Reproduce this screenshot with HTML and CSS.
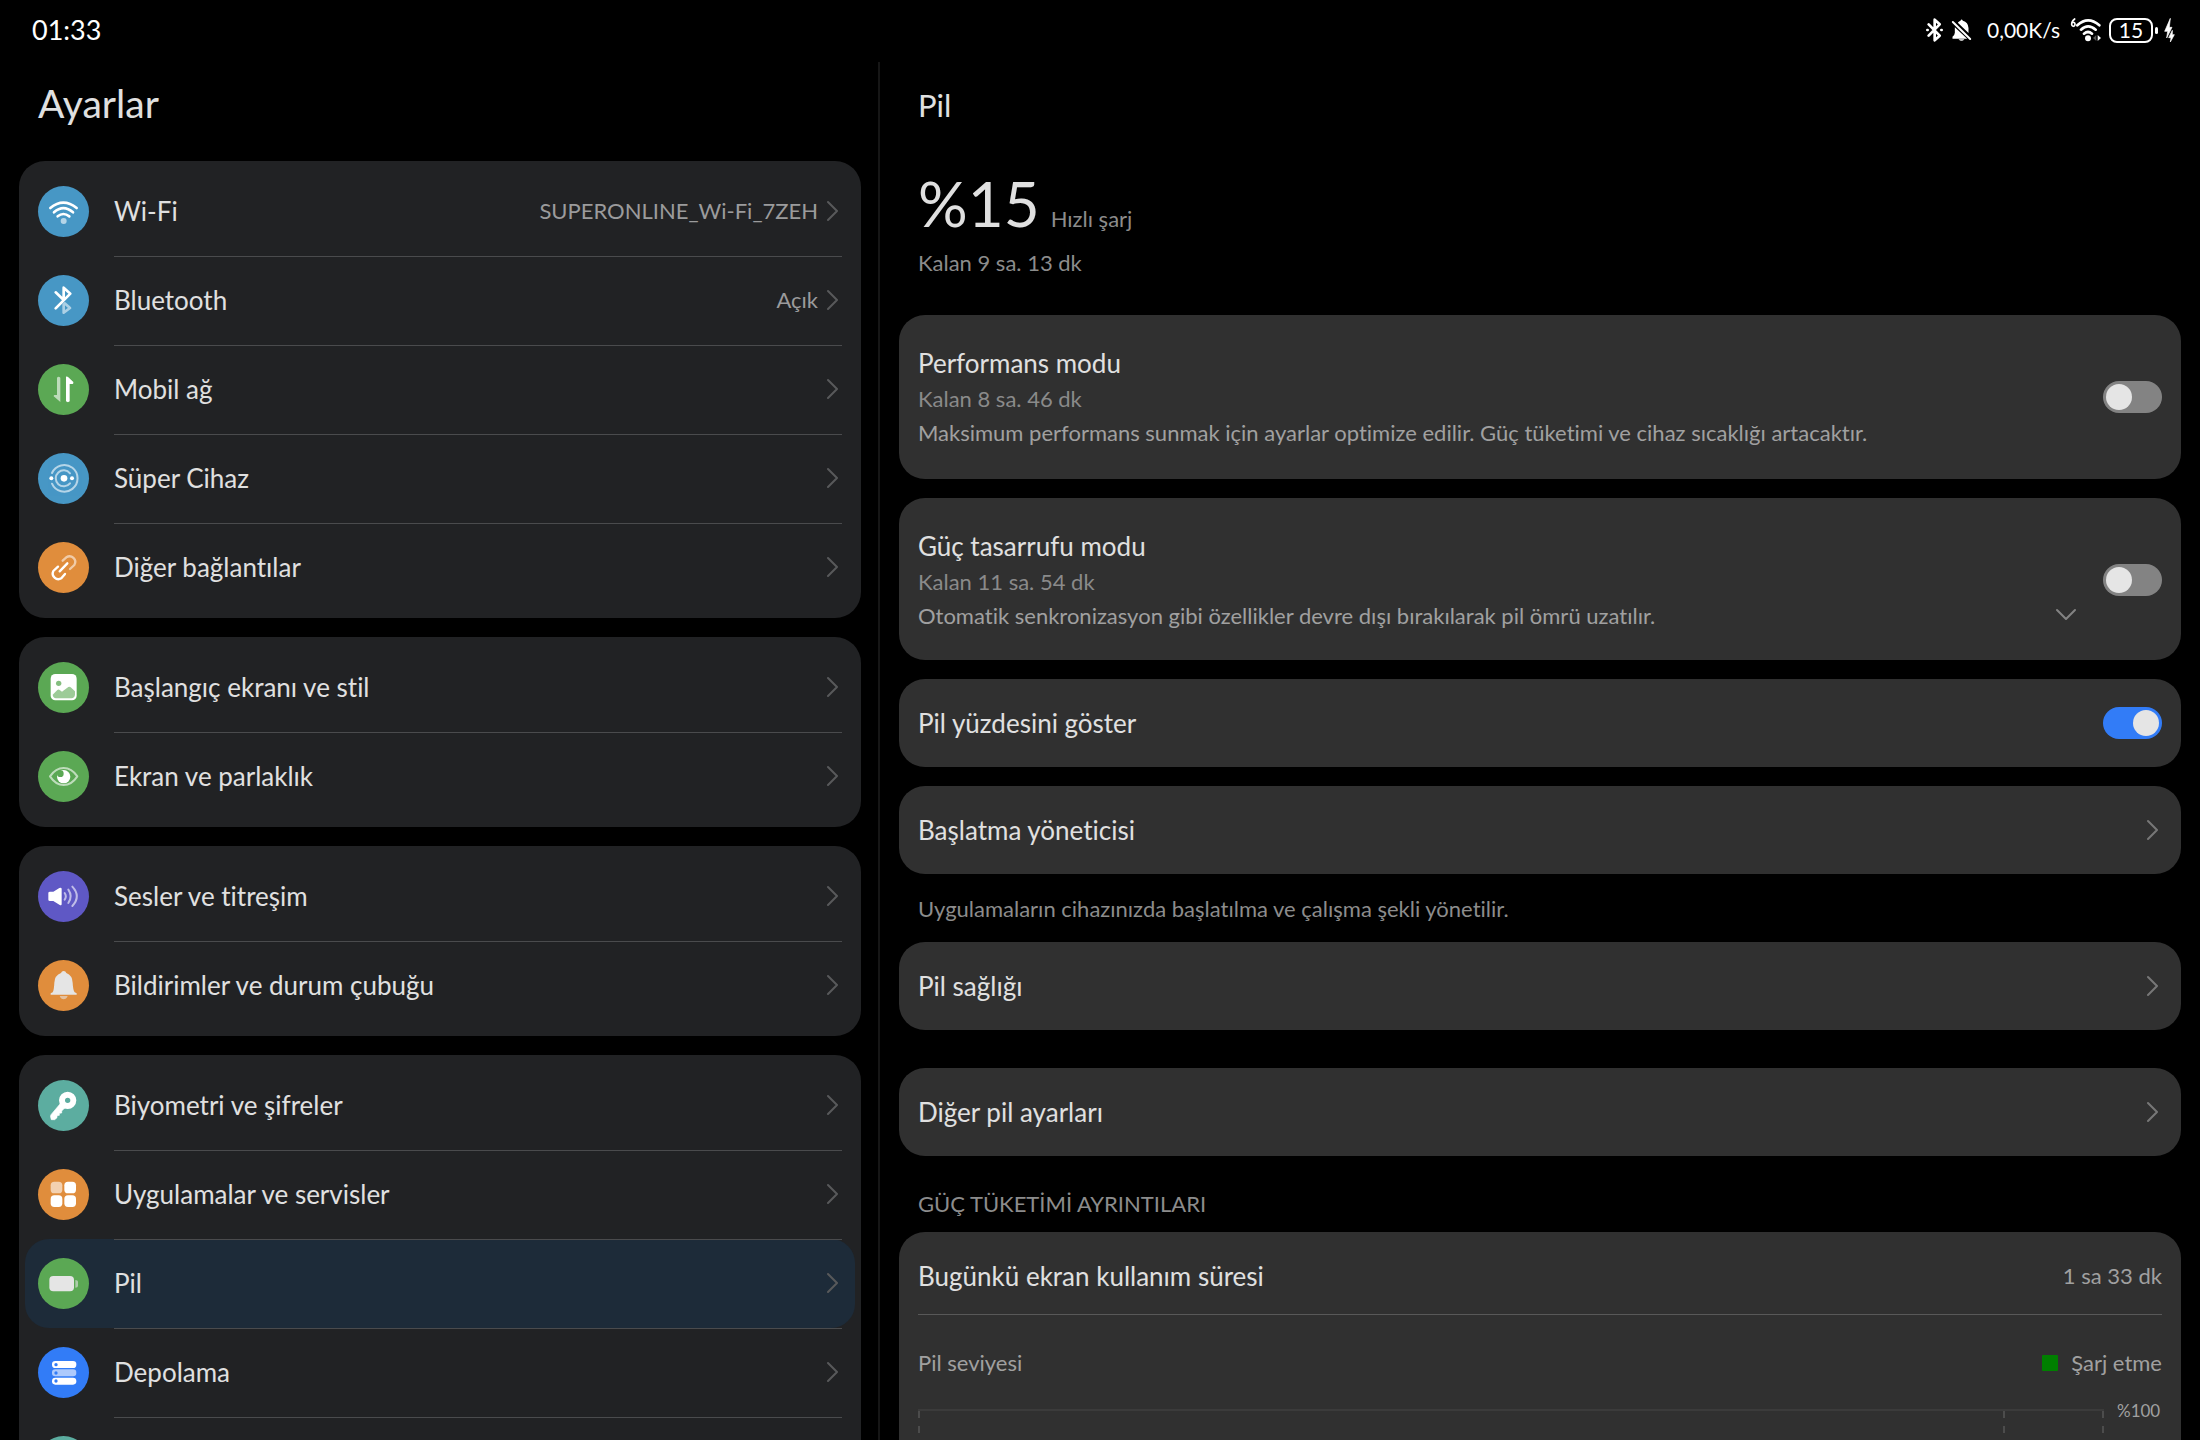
FILE: index.html
```html
<!DOCTYPE html>
<html lang="tr">
<head>
<meta charset="utf-8">
<meta name="viewport" content="width=device-width, initial-scale=1">
<title>Ayarlar</title>
<link rel="stylesheet" href="styles.css">
</head>
<body>
<svg class="defs" aria-hidden="true">
  <symbol id="chev" viewBox="0 0 12 22"><path d="M1 2l9 9-9 9" fill="none" stroke="currentColor" stroke-width="2" stroke-linecap="round" stroke-linejoin="round"/></symbol>
</svg>
<header class="status">
  <time class="clock">01:33</time>
  <div class="tray">
    <svg width="17" height="24" viewBox="0 0 51 72" fill="none" stroke="#fff" stroke-width="8" stroke-linejoin="round" stroke-linecap="round"><path d="M8 19L41 53 26 67V5L41 19 8 53"/><path d="M4 36h1M46 36h1"/></svg>
    <svg class="mute" width="21" height="24" viewBox="0 0 62 72"><path d="M22 12Q25 9 28 8Q31 1 35 8Q51 12 52 30V45L20 14zM11 28L48 62H4V56Q11 50 11 44zM22 64h18q-9 9-18 0z" fill="#fff"/><path d="M5 12L57 63" stroke="#fff" stroke-width="6" stroke-linecap="round"/></svg>
    <span class="rate">0,00K/s</span>
    <svg class="wifi6" width="32" height="26" viewBox="0 0 96 78" fill="none" stroke="#fff" stroke-width="8" stroke-linecap="round"><path d="M14 6Q5 12 5 22a5 6 0 1 0 4-6" stroke-width="5"/><path d="M22 25Q54-5 88 25M33 38Q54 18 77 38M42 50Q54 40 66 50"/><circle cx="54" cy="64" r="9" fill="#fff" stroke="none"/><path d="M79 54v18l-10-9z" fill="#555" stroke="none"/><path d="M83 54v18l10-9z" fill="#fff" stroke="none"/></svg>
    <span class="batt">15</span>
    <svg width="11" height="26" viewBox="0 0 33 78" fill="#fff" stroke="#fff" stroke-width="2" stroke-linejoin="round"><path d="M19 4L2 43h9L8 63 24 31H16zM25 40L14 62h7l-2 13 12-22h-6z"/></svg>
  </div>
</header>
<div class="panes">
  <nav class="side" aria-label="Ayarlar">
    <h1>Ayarlar</h1>
    <ul class="group">
      <li><a href="#wifi"><svg class="ico blue" viewBox="0 0 153 153"><g fill="none" stroke="#fff" stroke-width="8" stroke-linecap="round"><path d="M37 66Q76 34 116 66M48 79Q76 54 105 79M59 91Q76 77 94 91"/></g><circle cx="77" cy="105" r="9" fill="#fff" opacity=".6"/></svg><span class="line"><span class="name">Wi-Fi</span><span class="val">SUPERONLINE_Wi-Fi_7ZEH</span><svg class="chev"><use href="#chev"/></svg></span></a></li>
      <li><a href="#bt"><svg class="ico blue" viewBox="0 0 153 153"><g fill="none" stroke="#fff" stroke-width="8" stroke-linecap="round" stroke-linejoin="round"><path d="M80 85L96 99 77 113V88" opacity=".55"/><path d="M53 52L77 75M77 72V38L97 56 53 100"/></g></svg><span class="line"><span class="name">Bluetooth</span><span class="val">Açık</span><svg class="chev"><use href="#chev"/></svg></span></a></li>
      <li><a href="#mobil"><svg class="ico green" viewBox="0 0 153 153"><path d="M57 41q5-5 10 0v73l-20-17q0-4 3-4h7z" fill="#fff" opacity=".6"/><path d="M84 38q4-1 7 2l15 14q1 5-2 6h-9v52q-5 5-11 0z" fill="#fff"/></svg><span class="line"><span class="name">Mobil ağ</span><svg class="chev"><use href="#chev"/></svg></span></a></li>
      <li><a href="#super"><svg class="ico blue" viewBox="0 0 153 153"><g fill="none" stroke="#fff" stroke-width="6" stroke-linecap="round" opacity=".6"><path d="M42 60A40 40 0 1 1 42 92"/><path d="M96 61A24 24 0 1 0 96 91"/></g><circle cx="78" cy="76" r="10" fill="#fff"/><circle cx="40" cy="76" r="6" fill="#fff"/><circle cx="102" cy="76" r="6" fill="#fff"/></svg><span class="line"><span class="name">Süper Cihaz</span><svg class="chev"><use href="#chev"/></svg></span></a></li>
      <li><a href="#diger"><svg class="ico orange" viewBox="0 0 153 153"><g fill="none" stroke="#fff" stroke-width="7" stroke-linecap="round" stroke-linejoin="round"><path d="M74 56L85 46A17 17 0 0 1 109 69L96 81" opacity=".55"/><path d="M60 74L46 87A17 17 0 0 0 70 109L81 96M88 64L65 88"/></g></svg><span class="line"><span class="name">Diğer bağlantılar</span><svg class="chev"><use href="#chev"/></svg></span></a></li>
    </ul>
    <ul class="group">
      <li><a href="#stil"><svg class="ico green" viewBox="0 0 153 153"><rect x="38" y="36" width="78" height="79" rx="14" fill="#fff"/><circle cx="62" cy="64" r="8" fill="#5ba854" opacity=".75"/><path d="M44 98L58 84Q62 81 66 85L72 89 91 75Q95 73 98 76L111 88V98Q110 108 100 109H54Q45 108 44 98z" fill="#5ba854" opacity=".6"/></svg><span class="line"><span class="name">Başlangıç ekranı ve stil</span><svg class="chev"><use href="#chev"/></svg></span></a></li>
      <li><a href="#ekran"><svg class="ico green" viewBox="0 0 153 153"><path d="M36 76Q53 51 77 51T118 76Q101 102 77 102T36 76z" fill="none" stroke="#fff" stroke-width="6" stroke-linejoin="round" opacity=".6"/><circle cx="77" cy="77" r="20" fill="#fff"/><circle cx="67" cy="68" r="10" fill="#5ba854"/></svg><span class="line"><span class="name">Ekran ve parlaklık</span><svg class="chev"><use href="#chev"/></svg></span></a></li>
    </ul>
    <ul class="group">
      <li><a href="#ses"><svg class="ico purple" viewBox="0 0 153 153"><path d="M36 62H46L64 51Q71 48 71 54V99Q71 105 64 101L46 90H36Q31 90 31 86V66Q31 62 36 62z" fill="#fff"/><g fill="none" stroke="#fff" stroke-width="6" stroke-linecap="round" opacity=".6"><path d="M80 66Q87 76 80 86M91 56Q105 76 91 96M103 47Q130 76 103 105"/></g></svg><span class="line"><span class="name">Sesler ve titreşim</span><svg class="chev"><use href="#chev"/></svg></span></a></li>
      <li><a href="#bildirim"><svg class="ico orange" viewBox="0 0 153 153"><path d="M77 33Q83 33 85 39Q103 46 104 68Q105 90 110 97L116 100V104H38V100L44 97Q48 90 49 68Q50 46 69 39Q71 33 77 33z" fill="#e5e5e5"/><path d="M65 108H89Q85 118 77 118T65 108z" fill="#e5e5e5" opacity=".6"/></svg><span class="line"><span class="name">Bildirimler ve durum çubuğu</span><svg class="chev"><use href="#chev"/></svg></span></a></li>
    </ul>
    <ul class="group">
      <li><a href="#bio"><svg class="ico teal" viewBox="0 0 153 153"><path d="M66 72L39 104Q37 107 38 112L40 119H50L57 113V107L64 106V100L71 99V93L80 84z" fill="#fff" stroke="#fff" stroke-width="2" stroke-linejoin="round"/><circle cx="89" cy="61" r="17" fill="none" stroke="#fff" stroke-width="18"/></svg><span class="line"><span class="name">Biyometri ve şifreler</span><svg class="chev"><use href="#chev"/></svg></span></a></li>
      <li><a href="#uyg"><svg class="ico orange" viewBox="0 0 153 153"><g fill="#fff"><rect x="38" y="38" width="35" height="35" rx="11" opacity=".6"/><rect x="79" y="38" width="35" height="35" rx="11"/><rect x="38" y="79" width="35" height="35" rx="11"/><rect x="79" y="79" width="35" height="35" rx="11"/></g></svg><span class="line"><span class="name">Uygulamalar ve servisler</span><svg class="chev"><use href="#chev"/></svg></span></a></li>
      <li class="on"><a href="#pil" aria-current="page"><svg class="ico green" viewBox="0 0 153 153"><rect x="34" y="54" width="74" height="46" rx="12" fill="#e5e5e5"/><path d="M112 66q8 0 8 5v13q0 5-8 5z" fill="#e5e5e5" opacity=".6"/></svg><span class="line"><span class="name">Pil</span><svg class="chev"><use href="#chev"/></svg></span></a></li>
      <li><a href="#depo"><svg class="ico royal" viewBox="0 0 153 153"><g fill="#fff"><rect x="42" y="42" width="73" height="21" rx="10"/><rect x="42" y="67" width="73" height="21" rx="10" opacity=".6"/><rect x="42" y="92" width="73" height="21" rx="10"/></g><g fill="#327cf7"><circle cx="54" cy="53" r="5"/><circle cx="54" cy="78" r="5"/><circle cx="54" cy="102" r="5"/></g></svg><span class="line"><span class="name">Depolama</span><svg class="chev"><use href="#chev"/></svg></span></a></li>
      <li><a href="#guvenlik" aria-label="Güvenlik"><svg class="ico teal" viewBox="0 0 153 153"></svg><span class="line"></span></a></li>
    </ul>
  </nav>
  <main class="detail">
    <h2>Pil</h2>
    <section class="level">
      <p><strong>%15</strong> <span>Hızlı şarj</span></p>
      <p>Kalan 9 sa. 13 dk</p>
    </section>
    <label class="card mode">
      <span class="text"><span class="title">Performans modu</span><span class="sub dim">Kalan 8 sa. 46 dk</span><span class="sub">Maksimum performans sunmak için ayarlar optimize edilir. Güç tüketimi ve cihaz sıcaklığı artacaktır.</span></span>
      <input class="switch" type="checkbox">
    </label>
    <div class="card mode save">
      <label class="text" for="save"><span class="title">Güç tasarrufu modu</span><span class="sub dim">Kalan 11 sa. 54 dk</span><span class="sub">Otomatik senkronizasyon gibi özellikler devre dışı bırakılarak pil ömrü uzatılır.</span></label>
      <button class="more" type="button" aria-label="Genişlet"><svg width="22" height="13" viewBox="0 0 22 13"><path d="M2 2l9 9 9-9" fill="none" stroke="#838383" stroke-width="2" stroke-linecap="round" stroke-linejoin="round"/></svg></button>
      <input class="switch" type="checkbox" id="save">
    </div>
    <label class="card single"><span class="title">Pil yüzdesini göster</span><input class="switch" type="checkbox" checked></label>
    <a class="card single" href="#baslatma"><span class="title">Başlatma yöneticisi</span><svg class="chev"><use href="#chev"/></svg></a>
    <p class="note">Uygulamaların cihazınızda başlatılma ve çalışma şekli yönetilir.</p>
    <a class="card single health" href="#saglik"><span class="title">Pil sağlığı</span><svg class="chev"><use href="#chev"/></svg></a>
    <a class="card single" href="#digerpil"><span class="title">Diğer pil ayarları</span><svg class="chev"><use href="#chev"/></svg></a>
    <h3>GÜÇ TÜKETİMİ AYRINTILARI</h3>
    <section class="card usage">
      <div class="today"><span class="title">Bugünkü ekran kullanım süresi</span><span class="sub">1 sa 33 dk</span></div>
      <div class="legend"><span class="sub">Pil seviyesi</span><span class="sub key">Şarj etme</span></div>
      <div class="chart"><div class="plot"><i></i><i></i><i></i></div><span class="tick">%100</span></div>
    </section>
  </main>
</div>
</body>
</html>
```
FILE: styles.css
```css
* { box-sizing: border-box; margin: 0; padding: 0; }
body {
  height: 100vh;
  display: flex;
  flex-direction: column;
  overflow: hidden;
  background: #000;
  color: #e0e0e0;
  font: 26px/34px Lato, "Noto Sans", sans-serif;
  font-variant-ligatures: none;
}
a { color: inherit; text-decoration: none; }
ul { list-style: none; }
h1, h2, h3, strong { font-weight: 400; }
.defs { display: none; }

.status {
  flex: none;
  height: 62px;
  padding: 0 25px 2px 32px;
  display: flex;
  align-items: center;
  justify-content: space-between;
  color: #fff;
}
.clock { font-size: 27px; }
.tray { display: flex; align-items: center; }
.mute { margin-left: 8px; }
.rate { margin: 0 10px 0 15px; font-size: 21px; }
.batt {
  position: relative;
  width: 44px;
  height: 25px;
  margin: 0 11px 0 7px;
  border: 2px solid #fff;
  border-radius: 8px;
  font-size: 21px;
  line-height: 20px;
  text-align: center;
}
.batt::after {
  content: "";
  position: absolute;
  right: -7px;
  top: 7px;
  width: 3px;
  height: 7px;
  border-radius: 2px;
  background: #fff;
}

.panes { flex: 1; min-height: 0; display: flex; }
.side {
  width: 40%;
  padding: 0 17px 0 19px;
  border-right: 2px solid #161616;
  overflow: hidden;
}
h1 { height: 99px; padding: 16px 19px 0; font-size: 39px; line-height: 50px; }
.group {
  margin-bottom: 19px;
  padding: 6px;
  border-radius: 26px;
  background: #212224;
}
.group a { display: flex; align-items: center; gap: 25px; height: 89px; padding: 0 13px; }
.ico { flex: none; width: 51px; height: 51px; border-radius: 50%; }
.blue { background: #4797c5; }
.green { background: #5ba854; }
.orange { background: #e08d3c; }
.purple { background: #5f58c5; }
.teal { background: #5cada0; }
.royal { background: #327cf7; }
.line { flex: 1; height: 89px; padding-bottom: 2px; display: flex; align-items: center; }
li + li .line { border-top: 1px solid #4a4b4d; }
.name { flex: 1; }
.on { border-radius: 24px; background: #1d2b39; }
.val { margin-right: 9px; font-size: 22px; color: #9b9b9c; }
.chev { flex: none; width: 12px; height: 22px; margin-right: 3px; color: #58595b; }

.detail { flex: 1; min-width: 0; padding: 0 19px; overflow: hidden; }
h2 { padding: 23px 19px 0; font-size: 31px; line-height: 40px; }
.level { height: 190px; padding: 40px 19px 0; font-size: 22px; color: #8c8c8c; }
.level p { display: flex; align-items: baseline; gap: 11px; }
.level p + p { margin-top: 5px; }
.level strong { font-size: 62px; line-height: 76px; color: #e0e0e0; }
.card {
  margin-bottom: 19px;
  padding: 0 19px;
  display: flex;
  align-items: center;
  border-radius: 26px;
  background: #303030;
}
.mode { padding-top: 29px; padding-bottom: 29px; }
.save { padding-bottom: 27px; }
.text { flex: 1; display: flex; flex-direction: column; }
.text .title { line-height: 38px; }
.sub { font-size: 22px; color: #a0a0a0; }
.dim { color: #8a8a8a; }
.more {
  align-self: flex-end;
  height: 34px;
  margin-right: 26px;
  border: 0;
  background: none;
}
.switch {
  appearance: none;
  flex: none;
  width: 59px;
  height: 32px;
  padding: 3px;
  display: flex;
  border-radius: 16px;
  background: #838383;
}
.switch::before { content: ""; width: 26px; height: 26px; border-radius: 50%; background: #e5e5e5; }
.switch:checked { justify-content: flex-end; background: #327cf7; }
.single { height: 88px; }
.single .title { flex: 1; }
.single .chev { color: #777; }
.note { margin: -1px 19px 16px; font-size: 22px; color: #8c8c8c; }
.health { margin-bottom: 38px; }
h3 { margin: 31px 19px 11px; font-size: 22px; color: #8c8c8c; }
.usage { display: block; padding-top: 6px; }
.today, .legend { display: flex; align-items: center; justify-content: space-between; }
.today { height: 77px; border-bottom: 1px solid #585858; }
.legend { height: 94px; padding-top: 2px; }
.key { display: flex; align-items: center; gap: 13px; }
.key::before { content: ""; width: 16px; height: 16px; border-radius: 1px; background: #007f00; }
.chart { display: flex; gap: 13px; height: 300px; }
.plot {
  flex: 1;
  display: grid;
  grid-template-columns: 11fr 1fr 2px;
  border-top: 2px solid #3b3b3b;
}
.plot i { width: 2px; background: repeating-linear-gradient(#4c4c4c 0 7px, transparent 7px 15px); }
.tick { width: 45px; margin-top: -10px; font-size: 17px; line-height: 24px; color: #a0a0a0; }
```
